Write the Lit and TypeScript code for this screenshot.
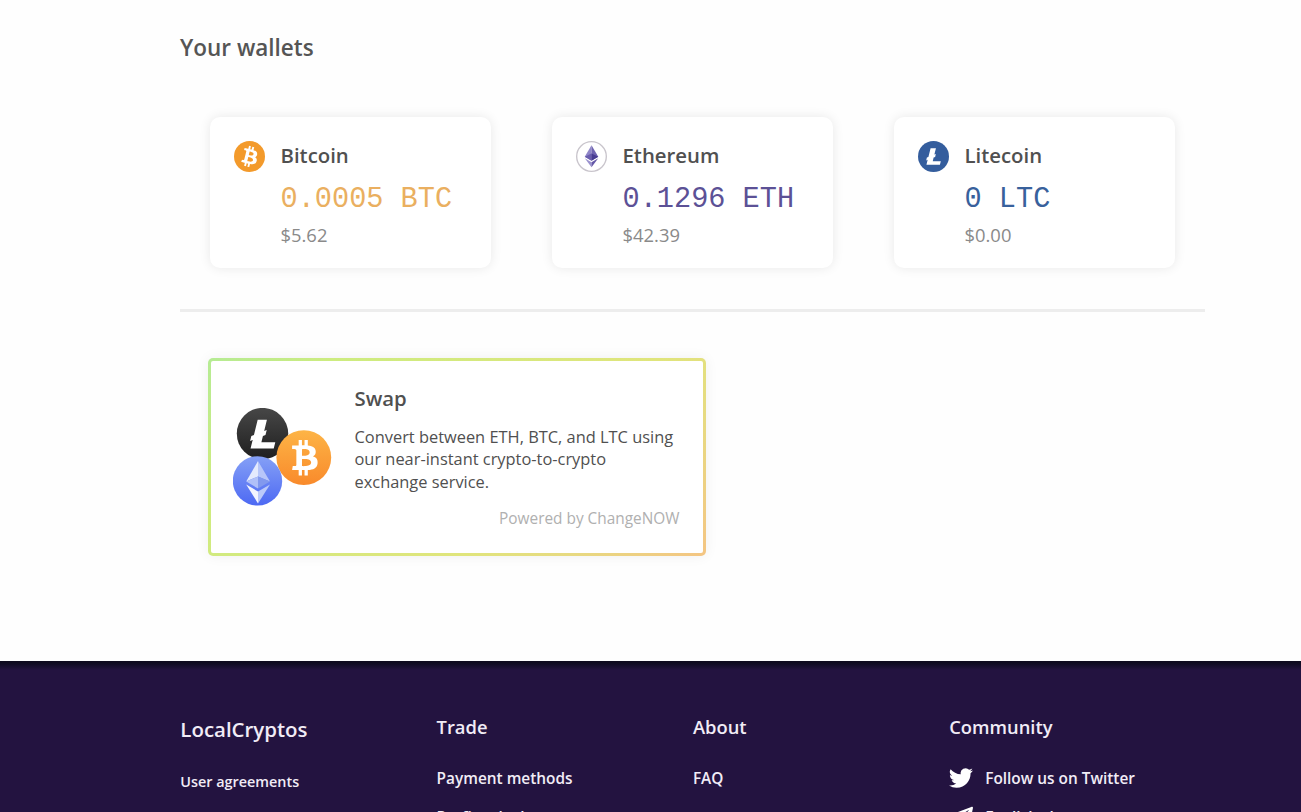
import { LitElement, css, html, svg, nothing } from "lit";
import { customElement, property } from "lit/decorators.js";

const btcGlyph = svg`<path d="M23.189 14.02c.314-2.096-1.283-3.223-3.465-3.975l.708-2.84-1.728-.43-.69 2.765c-.454-.114-.92-.22-1.385-.326l.695-2.783L15.596 6l-.708 2.839c-.376-.086-.746-.17-1.104-.26l.002-.009-2.384-.595-.46 1.846s1.283.294 1.256.312c.7.175.826.638.805 1.006l-.806 3.235c.048.012.11.03.18.057l-.183-.045-1.13 4.532c-.086.212-.303.531-.793.41.018.025-1.256-.313-1.256-.313l-.858 1.978 2.25.561c.418.105.828.215 1.231.318l-.715 2.872 1.727.43.708-2.84c.472.127.93.245 1.378.357l-.706 2.828 1.728.43.715-2.866c2.948.558 5.164.333 6.097-2.333.752-2.146-.037-3.385-1.588-4.192 1.13-.26 1.98-1.003 2.207-2.538zm-3.95 5.538c-.533 2.147-4.148.986-5.32.695l.95-3.805c1.172.293 4.929.872 4.37 3.11zm.535-5.569c-.487 1.953-3.495.96-4.47.717l.86-3.45c.975.243 4.118.696 3.61 2.733z" />`;

const ltcGlyph = svg`<path d="M10.427 19.214L9 19.768l.688-2.759 1.444-.58L13.213 8h5.129l-1.519 6.196 1.41-.571-.68 2.75-1.427.571-.848 3.483H23L22.127 24H9.252z" />`;

@customElement("coin-icon")
export class CoinIcon extends LitElement {
  @property({ type: String })
  coin = "btc";

  render() {
    if (this.coin === "btc") {
      return html`<svg viewBox="0 0 32 32">
        <circle cx="16" cy="16" r="16" fill="#f39a2b" />
        <g fill="#fff" transform="translate(16 16) scale(1.1) translate(-16 -16)">${btcGlyph}</g>
      </svg>`;
    }
    if (this.coin === "ltc") {
      return html`<svg viewBox="0 0 32 32">
        <circle cx="16" cy="16" r="16" fill="#345d9d" />
        <g fill="#fff" transform="translate(16 16) scale(1.08) translate(-16 -16)">${ltcGlyph}</g>
      </svg>`;
    }
    return html`<svg viewBox="0 0 32 32">
      <circle cx="16" cy="16" r="15.3" fill="#fff" stroke="#c9c5cc" stroke-width="1.4" />
      <path d="M16 4.5L9 16.2l7 4.1z" fill="#8f86c8" />
      <path d="M16 4.5l7 11.7-7 4.1z" fill="#6f63b0" />
      <path d="M9 16.2l7-3.2v7.3z" fill="#6a5eae" />
      <path d="M23 16.2L16 13v7.3z" fill="#483c92" />
      <path d="M9 17.8l7 9.4v-5.3z" fill="#9a92ce" />
      <path d="M23 17.8l-7 9.4v-5.3z" fill="#6558a8" />
    </svg>`;
  }

  static styles = css`
    :host {
      display: block;
      width: 31px;
      height: 31px;
    }

    svg {
      display: block;
      width: 100%;
      height: 100%;
    }
  `;
}

@customElement("wallet-card")
export class WalletCard extends LitElement {
  @property({ type: String })
  coin = "btc";

  @property({ type: String })
  name = "";

  @property({ type: String })
  amount = "";

  @property({ type: String })
  value = "";

  render() {
    return html`
      <coin-icon coin=${this.coin}></coin-icon>
      <div>
        <div class="name">${this.name}</div>
        <div class="amount ${this.coin}">${this.amount}</div>
        <div class="value">${this.value}</div>
      </div>
    `;
  }

  static styles = css`
    :host {
      display: flex;
      gap: 15.5px;
      box-sizing: border-box;
      height: 151px;
      padding: 24px;
      border-radius: 10px;
      background: #fff;
      box-shadow: 0 0 12px rgba(0, 0, 0, 0.09);
    }

    .name {
      color: #505050;
      font-size: 20.35px;
      font-weight: 600;
      line-height: 28px;
    }

    .amount {
      margin-top: 13px;
      font-family: "Liberation Mono", monospace;
      font-size: 28.6px;
      line-height: 36px;
      white-space: nowrap;
    }

    .btc {
      color: #eaaf60;
    }

    .eth {
      color: #5c5196;
    }

    .ltc {
      color: #38619c;
    }

    .value {
      margin-top: 4px;
      color: #8a8a8a;
      font-size: 18.4px;
      line-height: 26px;
    }
  `;
}

@customElement("swap-card")
export class SwapCard extends LitElement {
  render() {
    return html`
      <svg class="coins" viewBox="0 0 100 100">
        <defs>
          <linearGradient id="dark" x1="0" y1="0" x2="0" y2="1">
            <stop offset="0" stop-color="#474747" />
            <stop offset="1" stop-color="#1f1f1f" />
          </linearGradient>
          <linearGradient id="orange" x1="0" y1="0" x2="0" y2="1">
            <stop offset="0" stop-color="#fdb446" />
            <stop offset="1" stop-color="#f98a2b" />
          </linearGradient>
          <linearGradient id="blue" x1="0" y1="0" x2="0" y2="1">
            <stop offset="0" stop-color="#85a0f6" />
            <stop offset="1" stop-color="#4d69f3" />
          </linearGradient>
        </defs>
        <circle cx="29.5" cy="25.6" r="25.7" fill="url(#dark)" />
        <g fill="#fff" transform="translate(0.9 -2.6) scale(1.8)">${ltcGlyph}</g>
        <circle cx="70.8" cy="49.6" r="27.4" fill="url(#orange)" />
        <g fill="#fff" transform="translate(71 49.6) rotate(-14) scale(1.83) translate(-16.1 -16)">
          ${btcGlyph}
        </g>
        <circle cx="24.5" cy="72.9" r="24.7" fill="url(#blue)" />
        <path d="M25 53L13.2 73.5 25 68.5z" fill="#e4eafd" />
        <path d="M25 53L37 73.5 25 68.5z" fill="#b7c6f9" />
        <path d="M13.2 73.5L25 68.5v12z" fill="#b0c0f8" />
        <path d="M37 73.5L25 68.5v12z" fill="#8299ee" />
        <path d="M13.2 76.5L25 83.5v12z" fill="#f3f5ff" />
        <path d="M37 76.5L25 83.5v12z" fill="#bccafa" />
      </svg>
      <div class="body">
        <div class="title">Swap</div>
        <div class="text">
          Convert between ETH, BTC, and LTC using our near-instant crypto-to-crypto exchange service.
        </div>
        <div class="powered">Powered by ChangeNOW</div>
      </div>
    `;
  }

  static styles = css`
    :host {
      display: flex;
      align-items: center;
      gap: 22px;
      box-sizing: border-box;
      width: 498px;
      height: 198px;
      padding: 0 23.5px 0 21.5px;
      border: 3px solid transparent;
      border-radius: 5px;
      background:
        linear-gradient(#fff, #fff) padding-box,
        linear-gradient(135deg, #b5eb94 0%, #cdec80 18%, #e0e57c 65%, #e7da81 80%, #f4c583 100%) border-box;
      box-shadow: 0 0 14px rgba(0, 0, 0, 0.06);
    }

    .coins {
      flex: none;
      width: 100px;
      height: 100px;
      margin-top: 1px;
    }

    .body {
      flex: 1;
      color: #505050;
    }

    .title {
      font-size: 20.35px;
      font-weight: 600;
      line-height: 26px;
    }

    .text {
      margin-top: 15px;
      font-size: 16.4px;
      line-height: 22.4px;
    }

    .powered {
      margin-top: 15px;
      color: #b0b0b0;
      font-size: 15.4px;
      line-height: 21px;
      text-align: right;
    }
  `;
}

const twitter = svg`<path d="M23.95 4.57a10 10 0 0 1-2.82.77 4.96 4.96 0 0 0 2.16-2.72c-.95.55-2 .96-3.13 1.18a4.92 4.92 0 0 0-8.38 4.48C7.69 8.1 4.07 6.13 1.64 3.16a4.92 4.92 0 0 0 1.52 6.57 4.9 4.9 0 0 1-2.23-.61v.06c0 2.38 1.7 4.37 3.95 4.82a5 5 0 0 1-2.21.09 4.94 4.94 0 0 0 4.6 3.42A9.87 9.87 0 0 1 0 19.54a13.94 13.94 0 0 0 7.55 2.21c9.05 0 14-7.5 14-13.98 0-.21 0-.42-.02-.63a9.94 9.94 0 0 0 2.42-2.57z" />`;
const telegram = svg`<path d="M23.9 3.2L20.3 20.6c-.3 1.2-1 1.5-2 .9l-5.5-4.1-2.7 2.6c-.3.3-.5.5-1.1.5l.4-5.6L19.6 5.7c.4-.4-.1-.6-.7-.2L6.3 13.4.9 11.7c-1.2-.4-1.2-1.2.2-1.7L22.3 1.9c1-.4 1.9.2 1.6 1.3z" />`;

interface FooterLink {
  label: string;
  icon?: unknown;
}

interface FooterColumn {
  title: string;
  brand?: boolean;
  links: FooterLink[];
}

const columns: FooterColumn[] = [
  { title: "LocalCryptos", brand: true, links: [{ label: "User agreements" }] },
  { title: "Trade", links: [{ label: "Payment methods" }, { label: "Profit calculator" }] },
  { title: "About", links: [{ label: "FAQ" }] },
  {
    title: "Community",
    links: [
      { label: "Follow us on Twitter", icon: twitter },
      { label: "English chat", icon: telegram },
    ],
  },
];

@customElement("page-footer")
export class PageFooter extends LitElement {
  render() {
    return html`${columns.map(
      (column) => html`
        <div class="column ${column.brand ? "brand" : ""}">
          <div class="title">${column.title}</div>
          ${column.links.map(
            (link) => html`
              <div class="link">
                ${link.icon ? html`<svg viewBox="0 0 24 24">${link.icon}</svg>` : nothing}
                <span>${link.label}</span>
              </div>
            `
          )}
        </div>
      `
    )}`;
  }

  static styles = css`
    :host {
      display: grid;
      grid-template-columns: repeat(4, 256.3px);
      box-sizing: border-box;
      height: 151px;
      padding: 52px 0 0 180.3px;
      overflow: hidden;
      background: linear-gradient(#0d0a1c 0, #110c24 3px, #231340 9px);
      color: #f1ecf6;
    }

    .title {
      margin-bottom: 23px;
      font-size: 18.35px;
      font-weight: 600;
      line-height: 28px;
    }

    .link {
      display: flex;
      align-items: center;
      gap: 12px;
      height: 28px;
      margin-bottom: 11px;
      font-size: 15.4px;
      font-weight: 600;
      line-height: 22px;
      white-space: nowrap;
    }

    .link span {
      padding-top: 2px;
    }

    .brand .title {
      margin-top: 1px;
      margin-bottom: 23px;
      font-size: 20.45px;
      line-height: 30px;
    }

    .brand .link {
      font-size: 14.4px;
    }

    svg {
      width: 24px;
      height: 24px;
      fill: #fff;
    }
  `;
}

@customElement("app-root")
export class AppRoot extends LitElement {
  render() {
    return html`
      <main>
        <h1>Your wallets</h1>
        <div class="wallets">
          <wallet-card coin="btc" name="Bitcoin" amount="0.0005 BTC" value="$5.62"></wallet-card>
          <wallet-card coin="eth" name="Ethereum" amount="0.1296 ETH" value="$42.39"></wallet-card>
          <wallet-card coin="ltc" name="Litecoin" amount="0 LTC" value="$0.00"></wallet-card>
        </div>
        <div class="divider"></div>
        <swap-card></swap-card>
      </main>
      <page-footer></page-footer>
    `;
  }

  static styles = css`
    :host {
      display: flex;
      flex-direction: column;
      height: 812px;
      overflow: hidden;
      background: #fefefe;
      font-family: "Open Sans", sans-serif;
    }

    main {
      box-sizing: border-box;
      height: 661px;
      padding: 32px 96px 0 180px;
    }

    h1 {
      margin: 0;
      color: #555;
      font-size: 22.5px;
      font-weight: 600;
      line-height: 32px;
    }

    .wallets {
      display: grid;
      grid-template-columns: repeat(3, 281px);
      gap: 61px;
      margin: 53px 0 0 30px;
    }

    .divider {
      height: 3px;
      margin-top: 41px;
      background: #ededed;
    }

    swap-card {
      margin: 46px 0 0 28px;
    }
  `;
}

declare global {
  interface HTMLElementTagNameMap {
    "app-root": AppRoot;
    "coin-icon": CoinIcon;
    "wallet-card": WalletCard;
    "swap-card": SwapCard;
    "page-footer": PageFooter;
  }
}
